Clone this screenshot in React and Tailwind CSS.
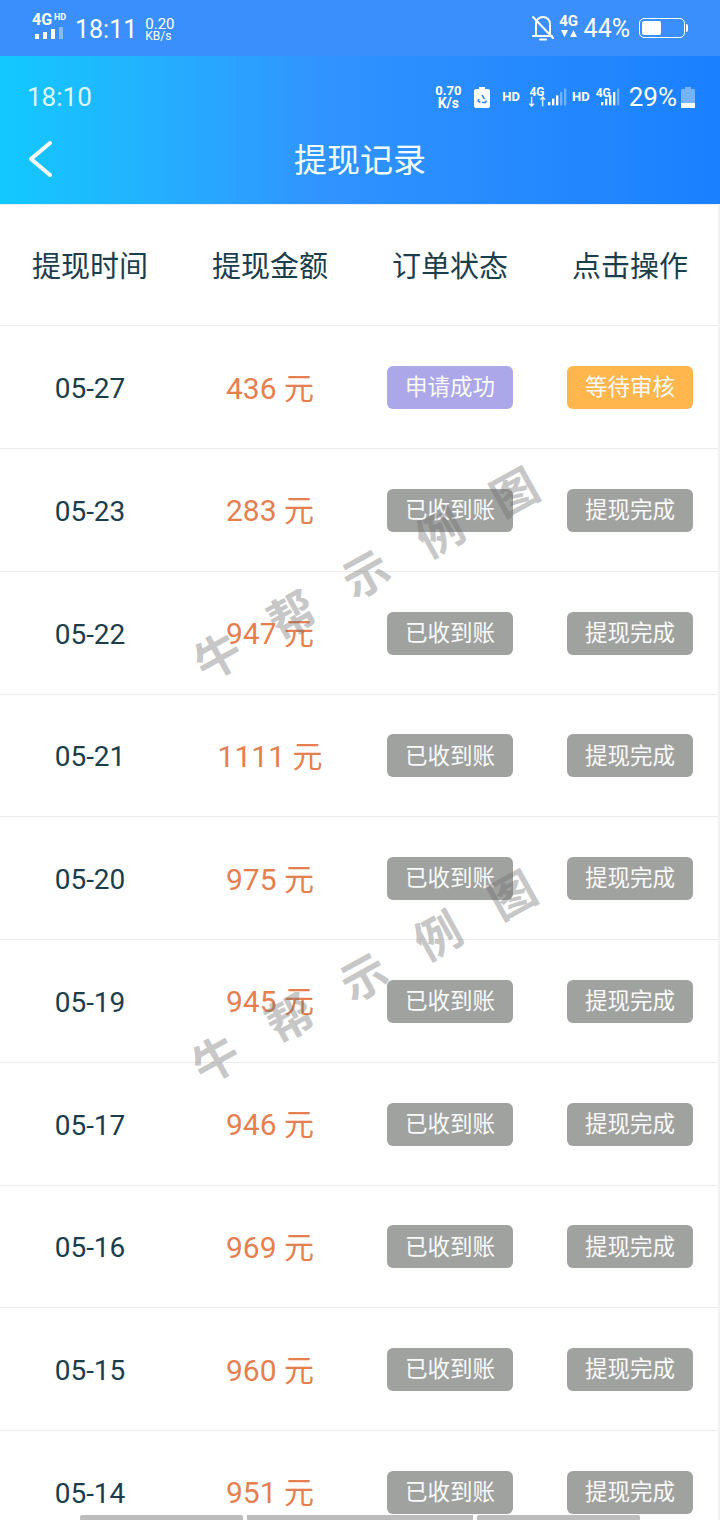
const rows = [
  ['05-27', '436'],
  ['05-23', '283'],
  ['05-22', '947'],
  ['05-21', '1111'],
  ['05-20', '975'],
  ['05-19', '945'],
  ['05-17', '946'],
  ['05-16', '969'],
  ['05-15', '960'],
  ['05-14', '951'],
];

function Signal({ bars, className }) {
  return (
    <svg width="20" height="22" viewBox="0 0 24 24" className={className}>
      {[0, 1, 2, 3, 4].map((i) => (
        <rect key={i} x={i * 4.8} y={22 - (i + 1) * 4} width="2.8" height={(i + 1) * 4} fill="#fff" opacity={i < bars ? 1 : 0.35} />
      ))}
    </svg>
  );
}

function TopBar() {
  return (
    <div className="flex h-14 items-center justify-between bg-[#3b8ffd] pl-[32px] pr-[32px] text-white">
      <div className="flex items-center">
        <div className="relative h-[28px] w-[32px]">
          <span className="absolute left-0 top-[-2px] text-[16px] font-bold leading-[16px]">4G</span>
          <span className="absolute left-[22px] top-[-2px] text-[9px] font-bold leading-[10px]">HD</span>
          <svg width="32" height="14" viewBox="0 0 32 14" className="absolute left-0 top-[13px]">
            <rect x="3" y="7" width="4" height="5" fill="#fff" />
            <rect x="11" y="5" width="4" height="7" fill="#fff" />
            <rect x="19" y="2" width="4" height="10" fill="#fff" />
            <rect x="27" y="0" width="4" height="12" fill="#fff" opacity="0.4" />
          </svg>
        </div>
        <span className="ml-[11px] mt-[2px] text-[25px] leading-none">18:11</span>
        <div className="ml-[8px] mt-[2px] flex flex-col items-start leading-[10px]">
          <span className="text-[15px] leading-[13px]">0.20</span>
          <span className="text-[12px]">KB/s</span>
        </div>
      </div>
      <div className="flex items-center">
        <svg width="24" height="28" viewBox="0 0 24 28" fill="none" stroke="#fff" strokeWidth="2" strokeLinecap="round" strokeLinejoin="round">
          <path d="M2 22h19M5 21V10c0-4 3-7 7-7s7 3 7 7v11" />
          <path d="M9 25.500h6" />
          <path d="M2 3l20 21" />
        </svg>
        <div className="ml-[5px] flex h-[28px] w-[18px] flex-col items-center">
          <span className="text-[15px] font-bold leading-[15px]">4G</span>
          <svg width="18" height="9" viewBox="0 0 18 9">
            <path d="M1 1h7L4.500 8zM10 8h7l-3.500-7z" fill="#fff" />
          </svg>
        </div>
        <span className="ml-[6px] text-[25px] leading-none">44%</span>
        <div className="ml-[9px] flex items-center">
          <div className="h-[20px] w-[46px] rounded-[5px] border border-white p-[2px]">
            <div className="h-full w-[19px] rounded-[2px] bg-white" />
          </div>
          <div className="ml-[1px] h-[8px] w-[2px] rounded-r-sm bg-white" />
        </div>
      </div>
    </div>
  );
}

function Header() {
  return (
    <div className="h-[148px] bg-gradient-to-r from-[#10c9ff] via-[#3093ff] via-45% to-[#1a80ff] text-white">
      <div className="flex h-[68px] items-end justify-between pb-[14px] pl-[27px] pr-[25px]">
        <span className="text-[26px] leading-none text-[#dff7ff]">18:10</span>
        <div className="flex items-center">
          <div className="flex flex-col items-center font-bold leading-[12px]">
            <span className="text-[13px]">0.70</span>
            <span className="text-[14px]">K/s</span>
          </div>
          <svg width="16" height="22" viewBox="0 0 16 22" className="ml-[13px]">
            <path d="M5 1h6v2h3a2 2 0 0 1 2 2v15a2 2 0 0 1-2 2H2a2 2 0 0 1-2-2V5a2 2 0 0 1 2-2h3z" fill="#fff" />
            <path d="M8 9l2.500 4M5 13l-1 2 2.500 1.500M8 16.500h3.500l1-2" fill="none" stroke="#2a8cff" strokeWidth="1.500" />
          </svg>
          <span className="ml-[12px] text-[13px] font-bold">HD</span>
          <div className="ml-[6px] flex flex-col items-center text-[12px] font-bold leading-[11px]">
            <span>4G</span>
            <span className="text-[11px] leading-[10px]">↓↑</span>
          </div>
          <Signal bars={3} className="ml-0" />
          <span className="ml-[4px] text-[13px] font-bold">HD</span>
          <span className="mb-[8px] ml-[6px] text-[12px] font-bold leading-[11px]">4G</span>
          <Signal bars={4} className="ml-[-10px]" />
          <span className="ml-[8px] text-[26px] leading-none">29%</span>
          <svg width="14" height="22" viewBox="0 0 14 22" className="ml-[4px]">
            <path d="M4 1h6v2h3a1 1 0 0 1 1 1v17a1 1 0 0 1-1 1H1a1 1 0 0 1-1-1V4a1 1 0 0 1 1-1h3z" fill="#fff" opacity="0.4" />
            <path d="M0 17h14v4a1 1 0 0 1-1 1H1a1 1 0 0 1-1-1z" fill="#fff" />
          </svg>
        </div>
      </div>
      <div className="relative flex h-[72px] items-center justify-center">
        <svg width="26" height="38" viewBox="0 0 26 38" fill="none" stroke="#fff" strokeWidth="4" strokeLinecap="round" strokeLinejoin="round" className="absolute left-[27px] top-[16px]">
          <path d="M23 3L4 19l19 16" />
        </svg>
        <span className="text-[33px] leading-none text-[#f4fbff]">提现记录</span>
      </div>
    </div>
  );
}

function Badge({ color, children }) {
  return (
    <div className={`flex h-[43px] w-[126px] items-center justify-center rounded-[6px] text-[22.500px] leading-none text-[#fafafa] ${color}`}>
      {children}
    </div>
  );
}

function Row({ date, amount, first }) {
  return (
    <div className="grid h-[122.750px] grid-cols-4 items-center border-b border-[#ececec] pt-[1px]">
      <div className="pt-[3px] text-center text-[28px] leading-none text-[#1b3d4c]">{date}</div>
      <div className="pt-[2px] text-center text-[30px] leading-none text-[#e57f4f]">{amount} 元</div>
      <div className="flex justify-center">
        <Badge color={first ? 'bg-[#aba7e8]' : 'bg-[#a0a2a0]'}>{first ? '申请成功' : '已收到账'}</Badge>
      </div>
      <div className="flex justify-center">
        <Badge color={first ? 'bg-[#ffb64d]' : 'bg-[#a0a2a0]'}>{first ? '等待审核' : '提现完成'}</Badge>
      </div>
    </div>
  );
}

function Watermark({ className }) {
  return (
    <div className={`pointer-events-none absolute flex w-[385px] -rotate-[29deg] justify-between text-[46px] font-semibold leading-none text-[#6b6b6b]/40 ${className}`}>
      <span>牛</span>
      <span>帮</span>
      <span>示</span>
      <span>例</span>
      <span>图</span>
    </div>
  );
}

export default function App() {
  return (
    <div
      className="relative h-[1520px] w-[720px] overflow-hidden bg-white"
      style={{ fontFamily: 'Roboto, "Noto Sans CJK SC", sans-serif' }}
    >
      <TopBar />
      <Header />
      <div className="grid h-[122.300px] grid-cols-4 items-center border-y border-[#ececec] pt-[4px] text-center text-[29px] leading-none text-[#1b3d4c]">
        <div>提现时间</div>
        <div>提现金额</div>
        <div>订单状态</div>
        <div>点击操作</div>
      </div>
      {rows.map((r, i) => (
        <Row key={r[0]} date={r[0]} amount={r[1]} first={i === 0} />
      ))}
      <div className="absolute bottom-0 right-0 top-[204px] w-[2px] bg-[#f2f2f2]" />
      <Watermark className="left-[174px] top-[552px]" />
      <Watermark className="left-[172px] top-[955px]" />
      <div className="absolute bottom-0 left-[80px] flex h-[5px] gap-[4px]">
        <div className="w-[163px] rounded-t-[2px] bg-[#bcbcbc]" />
        <div className="w-[226px] bg-[#bcbcbc]" />
        <div className="w-[163px] rounded-t-[2px] bg-[#bcbcbc]" />
      </div>
    </div>
  );
}
